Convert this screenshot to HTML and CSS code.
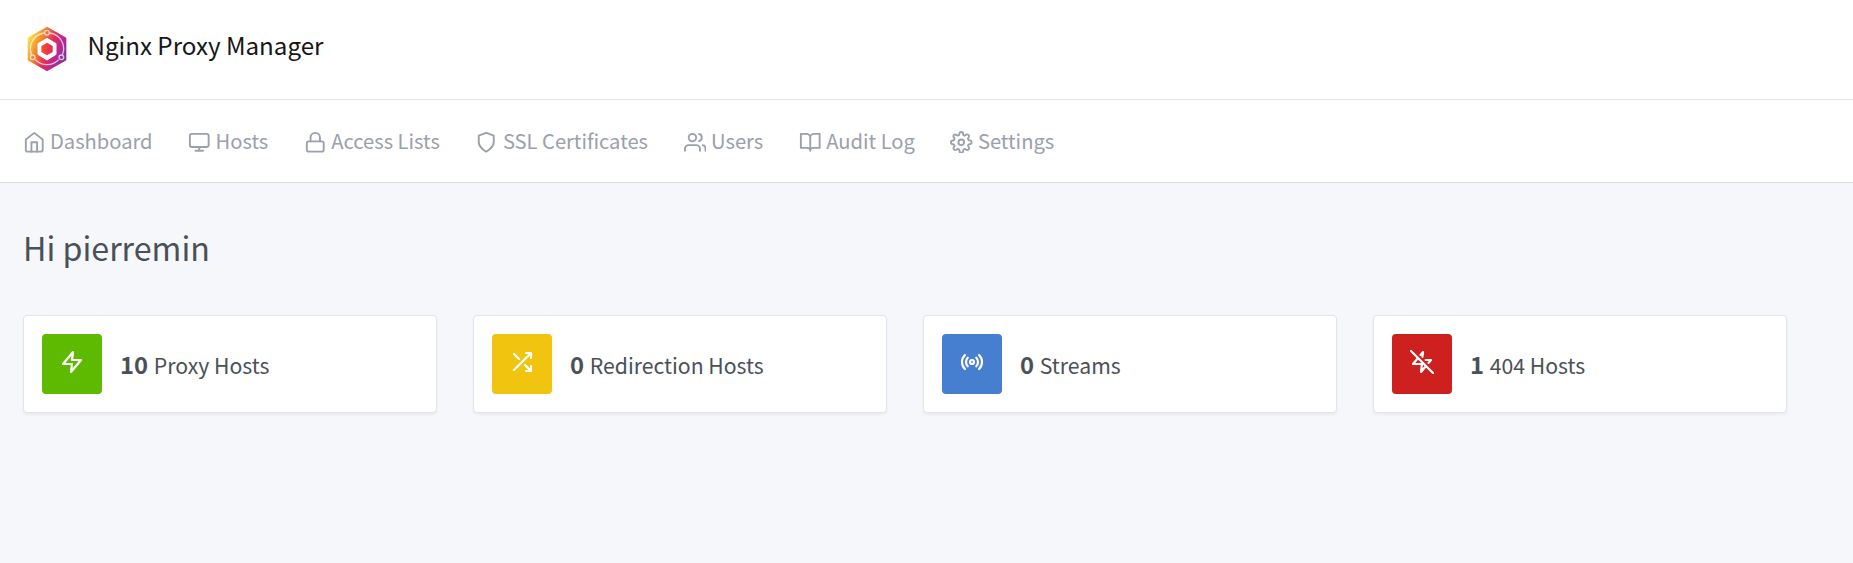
FILE: index.html
```html
<!DOCTYPE html>
<html lang="en">
<head>
<meta charset="utf-8">
<title>Nginx Proxy Manager</title>
<link rel="stylesheet" href="styles.css">
</head>
<body>
<header class="header">
  <svg class="logo" viewBox="0 0 120 136">
    <defs>
      <linearGradient id="warm" x1="0" y1="0.25" x2="1" y2="0.75">
        <stop offset="0" stop-color="#fbe94a"/>
        <stop offset="0.28" stop-color="#f58a2c"/>
        <stop offset="0.55" stop-color="#df2e5c"/>
        <stop offset="0.78" stop-color="#b3279a"/>
        <stop offset="1" stop-color="#6d3b98"/>
      </linearGradient>
      <linearGradient id="core" x1="0" y1="0" x2="1" y2="0">
        <stop offset="0" stop-color="#f4522f"/>
        <stop offset="1" stop-color="#e62757"/>
      </linearGradient>
    </defs>
    <path d="M60 1 118 34V102L60 135 2 102V34Z" fill="url(#warm)"/>
    <g fill="none" stroke="#fff" stroke-opacity=".7" stroke-width="4">
      <path d="M51 20C27 24 10 43 10 68c0 7 1 12 4 17M69 20c24 4 41 23 41 48 0 7-1 12-4 17M25 100c18 20 52 20 70 0"/>
      <circle cx="60" cy="19" r="7"/><circle cx="17" cy="93" r="7"/><circle cx="103" cy="93" r="7"/>
    </g>
    <path d="M60 36 87 52V84L60 101 33 84V52Z" fill="#fff" stroke="#fff" stroke-width="3" stroke-linejoin="round"/>
    <path d="M60 49 77 59V77L60 87 43 77V59Z" fill="url(#core)"/>
  </svg>
  <span class="brand">Nginx Proxy Manager</span>
</header>
<nav class="nav">
  <a class="item"><svg class="icon" viewBox="0 0 24 24"><path d="M3 9l9-7 9 7v11a2 2 0 0 1-2 2H5a2 2 0 0 1-2-2z"/><path d="M9 22V12h6v10"/></svg><span>Dashboard</span></a>
  <a class="item"><svg class="icon" viewBox="0 0 24 24"><rect x="2" y="3" width="20" height="14" rx="2"/><path d="M8 21h8M12 17v4"/></svg><span>Hosts</span></a>
  <a class="item"><svg class="icon" viewBox="0 0 24 24"><rect x="3" y="11" width="18" height="11" rx="2"/><path d="M7 11V7a5 5 0 0 1 10 0v4"/></svg><span>Access Lists</span></a>
  <a class="item"><svg class="icon" viewBox="0 0 24 24"><path d="M12 22s8-4 8-10V5l-8-3-8 3v7c0 6 8 10 8 10z"/></svg><span>SSL Certificates</span></a>
  <a class="item"><svg class="icon" viewBox="0 0 24 24"><path d="M17 21v-2a4 4 0 0 0-4-4H5a4 4 0 0 0-4 4v2"/><circle cx="9" cy="7" r="4"/><path d="M23 21v-2a4 4 0 0 0-3-3.87M16 3.13a4 4 0 0 1 0 7.75"/></svg><span>Users</span></a>
  <a class="item"><svg class="icon" viewBox="0 0 24 24"><path d="M2 3h6a4 4 0 0 1 4 4v14a3 3 0 0 0-3-3H2zM22 3h-6a4 4 0 0 0-4 4v14a3 3 0 0 1 3-3h7z"/></svg><span>Audit Log</span></a>
  <a class="item"><svg class="icon" viewBox="0 0 24 24"><circle cx="12" cy="12" r="3"/><path d="M19.4 15a1.65 1.65 0 0 0 .33 1.82l.06.06a2 2 0 0 1 0 2.83 2 2 0 0 1-2.83 0l-.06-.06a1.65 1.65 0 0 0-1.82-.33 1.65 1.65 0 0 0-1 1.51V21a2 2 0 0 1-2 2 2 2 0 0 1-2-2v-.09A1.65 1.65 0 0 0 9 19.4a1.65 1.65 0 0 0-1.82.33l-.06.06a2 2 0 0 1-2.83 0 2 2 0 0 1 0-2.83l.06-.06a1.65 1.65 0 0 0 .33-1.82 1.65 1.65 0 0 0-1.51-1H3a2 2 0 0 1-2-2 2 2 0 0 1 2-2h.09A1.65 1.65 0 0 0 4.6 9a1.65 1.65 0 0 0-.33-1.82l-.06-.06a2 2 0 0 1 0-2.83 2 2 0 0 1 2.83 0l.06.06a1.65 1.65 0 0 0 1.82.33H9a1.65 1.65 0 0 0 1-1.51V3a2 2 0 0 1 2-2 2 2 0 0 1 2 2v.09a1.65 1.65 0 0 0 1 1.51 1.65 1.65 0 0 0 1.82-.33l.06-.06a2 2 0 0 1 2.83 0 2 2 0 0 1 0 2.83l-.06.06a1.65 1.65 0 0 0-.33 1.82V9a1.65 1.65 0 0 0 1.51 1H21a2 2 0 0 1 2 2 2 2 0 0 1-2 2h-.09a1.65 1.65 0 0 0-1.51 1z"/></svg><span>Settings</span></a>
</nav>
<main class="main">
  <h1 class="title">Hi pierremin</h1>
  <div class="cards">
    <a class="card"><span class="stamp green"><svg class="icon" viewBox="0 0 24 24"><path d="M13 2 3 14h9l-1 8 10-12h-9z"/></svg></span><span class="label"><b>10</b> Proxy Hosts</span></a>
    <a class="card"><span class="stamp yellow"><svg class="icon" viewBox="0 0 24 24"><path d="M16 3h5v5M4 20 21 3M21 16v5h-5M15 15l6 6M4 4l5 5"/></svg></span><span class="label"><b>0</b> Redirection Hosts</span></a>
    <a class="card"><span class="stamp blue"><svg class="icon" viewBox="0 0 24 24"><circle cx="12" cy="12" r="2"/><path d="M16.24 7.76a6 6 0 0 1 0 8.49m-8.48-.01a6 6 0 0 1 0-8.49m11.31-2.82a10 10 0 0 1 0 14.14m-14.14 0a10 10 0 0 1 0-14.14"/></svg></span><span class="label"><b>0</b> Streams</span></a>
    <a class="card"><span class="stamp red"><svg class="icon" viewBox="0 0 24 24"><path d="M12.41 6.75 13 2l-2.43 2.92M18.57 12.91 21 10h-5.34M8 8l-5 6h9l-1 8 5-6M1 1l22 22"/></svg></span><span class="label"><b>1</b> 404 Hosts</span></a>
  </div>
</main>
</body>
</html>
```
FILE: styles.css
```css
* { box-sizing: border-box; }
body {
  margin: 0;
  min-height: 563px;
  background: #f5f7fb;
  color: #495057;
  font-family: "Noto Sans CJK SC", "Noto Sans", sans-serif;
  white-space: nowrap;
}
.header {
  display: flex;
  height: 100px;
  padding: 26px 27px 0;
  background: #fff;
  border-bottom: 1px solid #dfe2e6;
}
.logo { width: 40px; height: 46px; }
.brand {
  margin: 0 0 0 20.5px;
  color: #161616;
  font-size: 24.15px;
  line-height: 38px;
}
.nav {
  display: flex;
  gap: 35.5px;
  height: 83px;
  padding: 0 22.5px;
  background: #fff;
  border-bottom: 1px solid #dce0e6;
}
.item {
  display: flex;
  align-items: center;
  gap: 5px;
  height: 84px;
  color: #9aa0ac;
  font-size: 20.15px;
}
.item span { padding-bottom: 3px; }
.icon {
  flex: none;
  width: 22.5px;
  height: 22.5px;
  fill: none;
  stroke: currentColor;
  stroke-width: 2;
  stroke-linecap: round;
  stroke-linejoin: round;
}
.main { padding: 38px 23px 0; }
.title {
  margin: 0;
  font-size: 32.2px;
  font-weight: 400;
  line-height: 52px;
}
.cards {
  display: grid;
  grid-template-columns: repeat(4, 414px);
  gap: 36px;
  margin-top: 42px;
}
.card {
  display: flex;
  height: 98px;
  padding: 18px;
  background: #fff;
  border: 1px solid #dfe4ee;
  border-radius: 4px;
  box-shadow: 0 2px 3px rgba(0, 0, 0, .05);
}
.stamp {
  display: flex;
  justify-content: center;
  width: 60px;
  height: 60px;
  padding-top: 16px;
  border-radius: 4px;
  color: #fff;
}
.stamp .icon { width: 24px; height: 24px; stroke-width: 2.2; }
.green { background: #5eba00; }
.yellow { background: #f1c40f; }
.blue { background: #467fcf; }
.red { background: #cd201f; }
.label {
  margin: 13px 0 0 18px;
  font-size: 21.2px;
  line-height: 36px;
}
.label b {
  margin-right: 1px;
  font-size: 23.8px;
  line-height: 1;
}
```
